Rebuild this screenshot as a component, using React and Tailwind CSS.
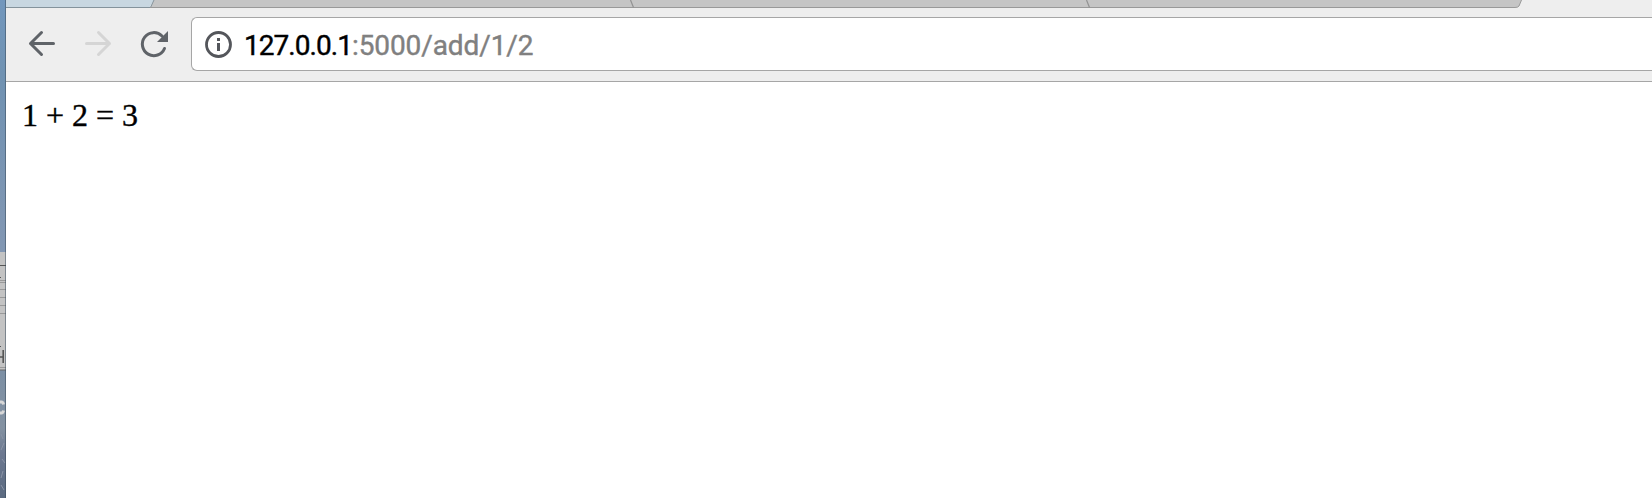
function DesktopEdge() {
  return (
    <aside className="h-[498px] w-1.5 shrink-0 overflow-hidden">
      <svg width="6" height="498" viewBox="0 0 6 498" className="block">
        <defs>
          <linearGradient id="sky" x1="0" y1="0" x2="0" y2="1">
            <stop offset="0" stopColor="#7297bd" />
            <stop offset="0.15" stopColor="#7092b2" />
            <stop offset="0.5" stopColor="#8297b3" />
            <stop offset="0.74" stopColor="#7c8fa4" />
            <stop offset="0.86" stopColor="#8492a2" />
            <stop offset="0.91" stopColor="#6c7890" />
            <stop offset="1" stopColor="#5b6a80" />
          </linearGradient>
        </defs>
        <rect width="6" height="498" fill="url(#sky)" />
        <rect y="252" width="6" height="118" fill="#c3c3c3" />
        <path d="M0 265.5h6" stroke="#555" />
        <path d="M0 280.5h6M0 282.5h6M0 289.5h6M0 297.5h6M0 305.5h6M0 313.5h6M0 367.5h6" stroke="#999" />
        <path d="M0 277.5h1M0 346.5h1" stroke="#555" />
        <path d="M0 357h3M3.2 350v13" stroke="#555" strokeWidth="1.6" fill="none" />
        <path d="M0 370h6" stroke="#666" />
        <path d="M0 402h1.5q1.500 0 2 2.500M0 413h1.5q1.500 0 2-2.500" stroke="#d8d8d8" strokeWidth="3" fill="none" />
        <path d="M1 434l2 5M4 443l-3 7M2 459l3 4M3 471l-2 7M1 485l3 5" stroke="#8a94a6" strokeWidth="1" />
        <path d="M5.5 0v498" stroke="#354858" strokeOpacity="0.5" />
      </svg>
    </aside>
  );
}

function TabStrip() {
  return (
    <div className="h-2 bg-[#eee]">
      <svg width="1646" height="8" viewBox="0 0 1646 8" className="block">
        <path d="M0 0h148L143 8H0z" fill="#c8d7e1" />
        <path d="M148 0H1515.500L1513 6Q1512 7.500 1509 7.500H144z" fill="#c5c5c5" />
        <path d="M0 7.500H144.500L148 0" fill="none" stroke="#84939c" />
        <path d="M144 7.500H1509Q1512 7.500 1513 6L1515.500 0" fill="none" stroke="#999" />
        <path d="M624.500 0l3 7.500M1080.500 0l3 7.500" stroke="#929292" strokeWidth="1.2" />
      </svg>
    </div>
  );
}

function NavButtons() {
  return (
    <svg width="185" height="73" viewBox="6 8 185 73" fill="none" className="block shrink-0">
      <g strokeWidth="3" strokeLinecap="round" strokeLinejoin="round">
        <path d="M53.500 43.500H30.500M41.500 32.500l-11 11 11 11" stroke="#5f6368" />
        <path d="M86.500 43.500h23M98.500 32.500l11 11-11 11" stroke="#d5d5d5" />
        <path d="M162 36A11.500 11.500 0 1 0 164.500 48.500" stroke="#5f6368" />
      </g>
      <path d="M168 31v11h-11z" fill="#5f6368" />
    </svg>
  );
}

function AddressBar() {
  return (
    <div className="mt-[9px] flex h-[54px] flex-1 items-center rounded-l-md border border-r-0 border-[#a6a6a6] bg-white pl-[13px]">
      <svg width="27" height="27" viewBox="0 0 27 27" fill="none" className="block shrink-0">
        <circle cx="13.500" cy="13.500" r="12" stroke="#54565b" strokeWidth="2.8" />
        <path d="M12 7h3v3h-3zM12 12h3v8h-3z" fill="#54565b" />
      </svg>
      <div className="ml-[12px] whitespace-nowrap pt-[3px] font-['Roboto',sans-serif] text-[28px] leading-8 tracking-[-0.1px] text-[#808080] [-webkit-text-stroke:0.4px_currentColor]">
        <span className="tracking-[-0.95px] text-black">127.0.0.1</span>:5000/add/1/2
      </div>
    </div>
  );
}

export default function App() {
  return (
    <div className="flex h-[498px] w-[1652px] overflow-hidden bg-white">
      <DesktopEdge />
      <div className="min-w-0 flex-1">
        <TabStrip />
        <header className="flex h-[74px] border-b border-[#a6a6a6] bg-[#eee]">
          <NavButtons />
          <AddressBar />
        </header>
        <main className="px-4 pt-[15px] font-['Liberation_Serif',serif] text-[32px] leading-9 text-black [-webkit-text-stroke:0.4px_currentColor]">
          1 + 2 = 3
        </main>
      </div>
    </div>
  );
}
